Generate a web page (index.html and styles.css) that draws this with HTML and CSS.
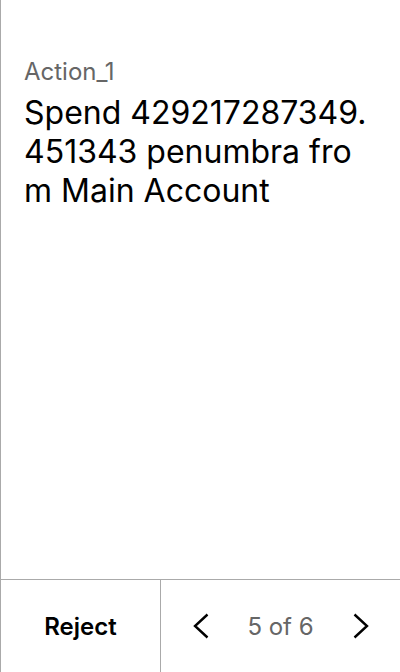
FILE: index.html
```html
<!DOCTYPE html>
<html>
<head>
<meta charset="utf-8">
<link rel="stylesheet" href="styles.css">
</head>
<body>
<div class="screen">
  <main class="content">
    <div class="label">Action_1</div>
    <div class="title">Spend 429217287349.451343 penumbra from Main Account</div>
  </main>
  <footer class="bar">
    <button class="reject">Reject</button>
    <div class="pager">
      <button class="nav" aria-label="Previous">
        <svg width="16" height="26" viewBox="0 0 16 26"><path d="M14.5 1.5 L2 13 L14.5 24.5" fill="none" stroke="#000" stroke-width="2.4"/></svg>
      </button>
      <span class="count">5 of 6</span>
      <button class="nav" aria-label="Next">
        <svg width="16" height="26" viewBox="0 0 16 26"><path d="M1.5 1.5 L14 13 L1.5 24.5" fill="none" stroke="#000" stroke-width="2.4"/></svg>
      </button>
    </div>
  </footer>
</div>
</body>
</html>
```
FILE: styles.css
```css
html, body {
  margin: 0;
  padding: 0;
  background: #fff;
}
body {
  font-family: Inter, "Noto Sans", sans-serif;
  color: #000;
}
.screen {
  width: 400px;
  height: 672px;
  box-sizing: border-box;
  border-left: 1px solid #aaa;
  display: flex;
  flex-direction: column;
}
.content {
  flex: 1;
  padding: 56px 24px 0 23px;
}
.label {
  font-size: 24px;
  line-height: 32px;
  color: #666;
}
.title {
  margin-top: 5px;
  font-size: 32px;
  line-height: 39px;
  font-weight: 400;
  word-break: break-all;
}
.bar {
  height: 92px;
  border-top: 1px solid #aaa;
  display: flex;
}
.reject {
  width: 160px;
  border: none;
  border-right: 1px solid #aaa;
  background: none;
  font-family: inherit;
  font-size: 24px;
  font-weight: 600;
  color: #000;
  padding: 0;
}
.pager {
  flex: 1;
  display: flex;
  align-items: center;
  justify-content: center;
  gap: 30px;
}
.nav {
  border: none;
  background: none;
  padding: 0;
  width: 16px;
  height: 26px;
  display: flex;
  align-items: center;
  justify-content: center;
}
.count {
  font-size: 24px;
  color: #666;
  width: 84px;
  text-align: center;
}
```
